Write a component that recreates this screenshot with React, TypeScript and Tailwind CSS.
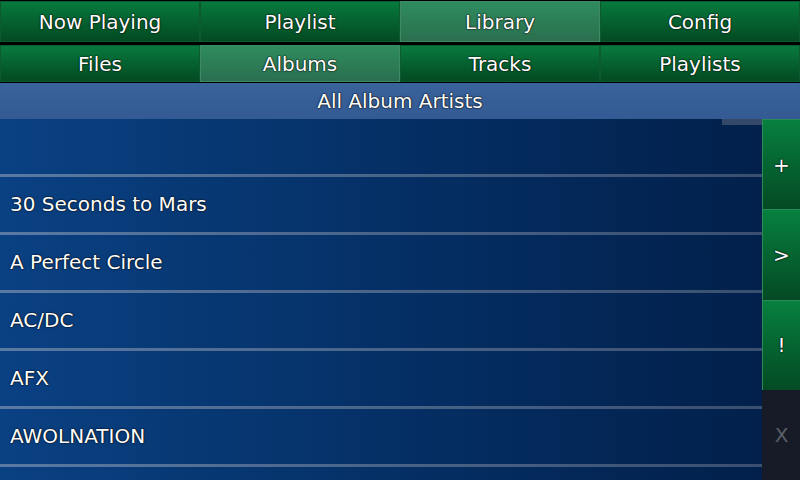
const topTabs = [
  { label: "Now Playing", active: false },
  { label: "Playlist", active: false },
  { label: "Library", active: true },
  { label: "Config", active: false },
];

const subTabs = [
  { label: "Files", active: false },
  { label: "Albums", active: true },
  { label: "Tracks", active: false },
  { label: "Playlists", active: false },
];

const artists = ["", "30 Seconds to Mars", "A Perfect Circle", "AC/DC", "AFX", "AWOLNATION", ""];

const sideButtons = [
  { label: "+", enabled: true },
  { label: ">", enabled: true },
  { label: "!", enabled: true },
  { label: "X", enabled: false },
];

const outline = "[text-shadow:0_0_2px_#000,0_0_1px_#000]";

function Tab({ label, active }: { label: string; active: boolean }) {
  return (
    <div
      className={`flex items-center justify-center border border-[#0c5a30] text-white text-[20px] ${outline} ${
        active
          ? "bg-gradient-to-b from-[#2f8c5f] to-[#2a6f4f] border-[#3d8a63]"
          : "bg-gradient-to-b from-[#087a3e] to-[#034a22]"
      }`}
    >
      {label}
    </div>
  );
}

export default function App() {
  return (
    <div
      className="w-[800px] h-[480px] bg-black flex flex-col overflow-hidden"
      style={{ fontFamily: '"DejaVu Sans", sans-serif' }}
    >
      <div className="grid grid-cols-4 h-[42px] pt-px">
        {topTabs.map((t) => (
          <Tab key={t.label} {...t} />
        ))}
      </div>
      <div className="grid grid-cols-4 h-[37px] mt-[3px]">
        {subTabs.map((t) => (
          <Tab key={t.label} {...t} />
        ))}
      </div>
      <div
        className={`h-[36px] mt-px bg-gradient-to-b from-[#3a629b] to-[#335a92] flex items-center justify-center text-white text-[20px] ${outline}`}
      >
        All Album Artists
      </div>

      <div className="flex flex-1 min-h-0">
        <div className="relative flex-1 bg-gradient-to-r from-[#0a4183] to-[#02204b] overflow-hidden">
          <div className="absolute top-0 right-0 w-[40px] h-[6px] bg-[#34486a]" />
          {artists.map((name, i) => (
            <div key={i}>
              <div className={`h-[55px] flex items-center pl-[10px] pb-[2px] text-white text-[20px] ${outline}`}>
                {name}
              </div>
              <div className="h-[3px] bg-gradient-to-r from-[#5a7aa3] to-[#3a4f70]" />
            </div>
          ))}
        </div>

        <div className="w-[38px] flex flex-col">
          {sideButtons.map((b) => (
            <div
              key={b.label}
              className={`flex-1 flex items-center justify-center text-[20px] border-l border-t ${
                b.enabled
                  ? `bg-gradient-to-b from-[#07803f] to-[#044a24] border-[#2b8a55] text-white ${outline}`
                  : "bg-[#161b27] border-[#161b27] text-[#5a5f68]"
              }`}
            >
              {b.label}
            </div>
          ))}
        </div>
      </div>
    </div>
  );
}
